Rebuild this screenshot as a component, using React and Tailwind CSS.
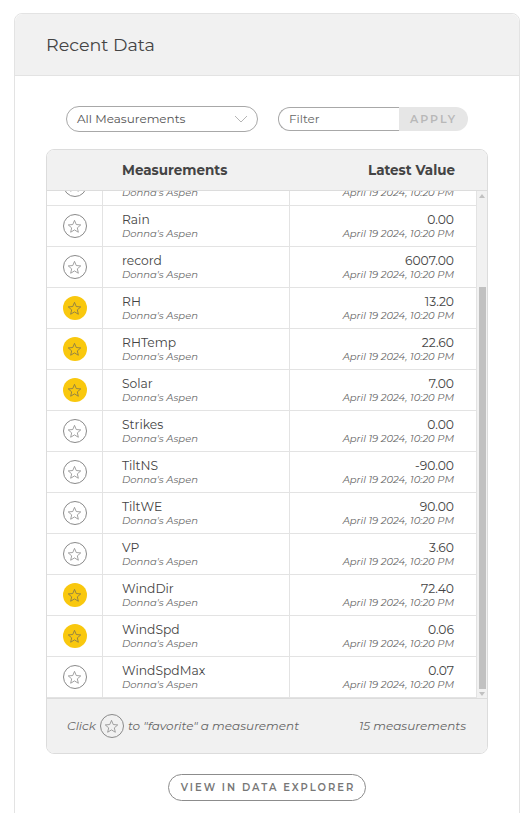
import React, { useLayoutEffect, useRef } from "react";

const rows = [
  { name: "Baro", value: "1013.00", fav: false },
  { name: "Battery", value: "12.80", fav: false },
  { name: "Pressure", value: "845.10", fav: false },
  { name: "Rain", value: "0.00", fav: false },
  { name: "record", value: "6007.00", fav: false },
  { name: "RH", value: "13.20", fav: true },
  { name: "RHTemp", value: "22.60", fav: true },
  { name: "Solar", value: "7.00", fav: true },
  { name: "Strikes", value: "0.00", fav: false },
  { name: "TiltNS", value: "-90.00", fav: false },
  { name: "TiltWE", value: "90.00", fav: false },
  { name: "VP", value: "3.60", fav: false },
  { name: "WindDir", value: "72.40", fav: true },
  { name: "WindSpd", value: "0.06", fav: true },
  { name: "WindSpdMax", value: "0.07", fav: false },
];

function Star({ fav }) {
  return (
    <div
      className={
        fav
          ? "w-[24px] h-[24px] rounded-full bg-[#f9c80e] flex items-center justify-center shrink-0"
          : "w-[24px] h-[24px] rounded-full border border-[#8a8a8a] flex items-center justify-center shrink-0"
      }
    >
      <svg width="21" height="21" viewBox="0 0 24 24" fill="none">
        <polygon
          points="12,5 14,9.75 19.13,10.18 15.23,13.55 16.41,18.57 12,15.9 7.59,18.57 8.77,13.55 4.87,10.18 10,9.75"
          stroke={fav ? "#7d7350" : "#8a8a8a"}
          strokeWidth="0.9"
          strokeLinejoin="round"
        />
      </svg>
    </div>
  );
}

export default function App() {
  const scrollRef = useRef(null);
  useLayoutEffect(() => {
    if (scrollRef.current) {
      scrollRef.current.scrollTop = scrollRef.current.scrollHeight;
    }
  }, []);

  return (
    <div
      className="w-[532px] h-[813px] overflow-hidden bg-white text-[#444]"
      style={{ fontFamily: 'Montserrat, "Open Sans", sans-serif' }}
    >
      <div className="ml-[14px] mt-[13px] w-[506px] rounded-lg border border-[#e3e3e3] pb-[60px]">
        <div className="h-[62px] flex items-center pl-[31px] pt-[2px] bg-[#f1f1f1] border-b border-[#e3e3e3] rounded-t-lg text-[17.5px] text-[#444]">
          Recent Data
        </div>
        <div className="pt-[30px] flex flex-col items-center">
          <div className="flex items-center gap-[20px]">
            <div className="w-[192px] h-[26px] rounded-full border border-[#a8a8a8] flex items-center justify-between pl-[10px] pr-[9px] text-[12px] text-[#555]">
              <span>All Measurements</span>
              <svg width="14" height="8" viewBox="0 0 14 8" fill="none">
                <polyline points="1,1 7,7 13,1" stroke="#b5b5b5" strokeWidth="1" />
              </svg>
            </div>
            <div className="flex items-center h-[24px]">
              <div className="w-[121px] h-[24px] rounded-l-full border border-r-0 border-[#a8a8a8] flex items-center pl-[10px] text-[12px] text-[#666]">
                Filter
              </div>
              <div className="w-[69px] h-[24px] rounded-r-full bg-[#e6e6e6] flex items-center justify-center text-[11px] font-semibold tracking-[2px] text-[#b8b8b8]">
                APPLY
              </div>
            </div>
          </div>

          <div className="mt-[17px] w-[442px] rounded-lg border border-[#dcdcdc] overflow-hidden">
            <div className="h-[41px] flex items-center bg-[#f1f1f1] border-b border-[#dcdcdc] text-[13.5px] font-bold text-[#444]">
              <div className="w-[56px]" />
              <div className="w-[187px] pl-[19px]">Measurements</div>
              <div className="flex-1 text-right pr-[32px]">Latest Value</div>
            </div>
            <div className="flex h-[507px]">
              <div
                ref={scrollRef}
                className="w-[430px] h-[507px] overflow-y-scroll [scrollbar-width:none]"
              >
                {rows.map((r) => (
                  <div key={r.name} className="h-[41px] flex border-b border-[#e3e3e3]">
                    <div className="w-[56px] border-r border-[#e3e3e3] flex items-center justify-center">
                      <Star fav={r.fav} />
                    </div>
                    <div className="w-[187px] border-r border-[#e3e3e3] pl-[19px] flex flex-col justify-center">
                      <div className="text-[12.3px] leading-[15px] text-[#444]">{r.name}</div>
                      <div className="text-[10px] leading-[13px] italic text-[#666]">Donna's Aspen</div>
                    </div>
                    <div className="w-[187px] border-r border-[#e3e3e3] pr-[22px] flex flex-col justify-center items-end">
                      <div className="text-[12.3px] leading-[15px] text-[#444]">{r.value}</div>
                      <div className="text-[10px] leading-[13px] italic text-[#666]">April 19 2024, 10:20 PM</div>
                    </div>
                  </div>
                ))}
              </div>
              <div className="w-[10px] h-[507px] bg-[#f1f1f1] flex flex-col items-center">
                <div className="h-[10px] flex items-center justify-center">
                  <svg width="6" height="4" viewBox="0 0 6 4">
                    <polygon points="3,0 6,4 0,4" fill="#c1c1c1" />
                  </svg>
                </div>
                <div className="mt-[86px] w-[7px] h-[402px] bg-[#c1c1c1]" />
                <div className="flex-1 flex items-center justify-center">
                  <svg width="6" height="4" viewBox="0 0 6 4">
                    <polygon points="0,0 6,0 3,4" fill="#c1c1c1" />
                  </svg>
                </div>
              </div>
            </div>
            <div className="h-[55px] bg-[#f1f1f1] border-t border-[#dcdcdc] flex items-center justify-between pl-[20px] pr-[21px] text-[12px] italic text-[#666]">
              <div className="flex items-center gap-[4px]">
                <span>Click</span>
                <Star fav={false} />
                <span>to "favorite" a measurement</span>
              </div>
              <span>15 measurements</span>
            </div>
          </div>

          <div className="mt-[20px] w-[198px] h-[27px] rounded-full border-[1.5px] border-[#8c8c8c] flex items-center justify-center whitespace-nowrap pl-[2px] text-[10px] font-semibold tracking-[2px] text-[#777]">
            VIEW IN DATA EXPLORER
          </div>
        </div>
      </div>
    </div>
  );
}
